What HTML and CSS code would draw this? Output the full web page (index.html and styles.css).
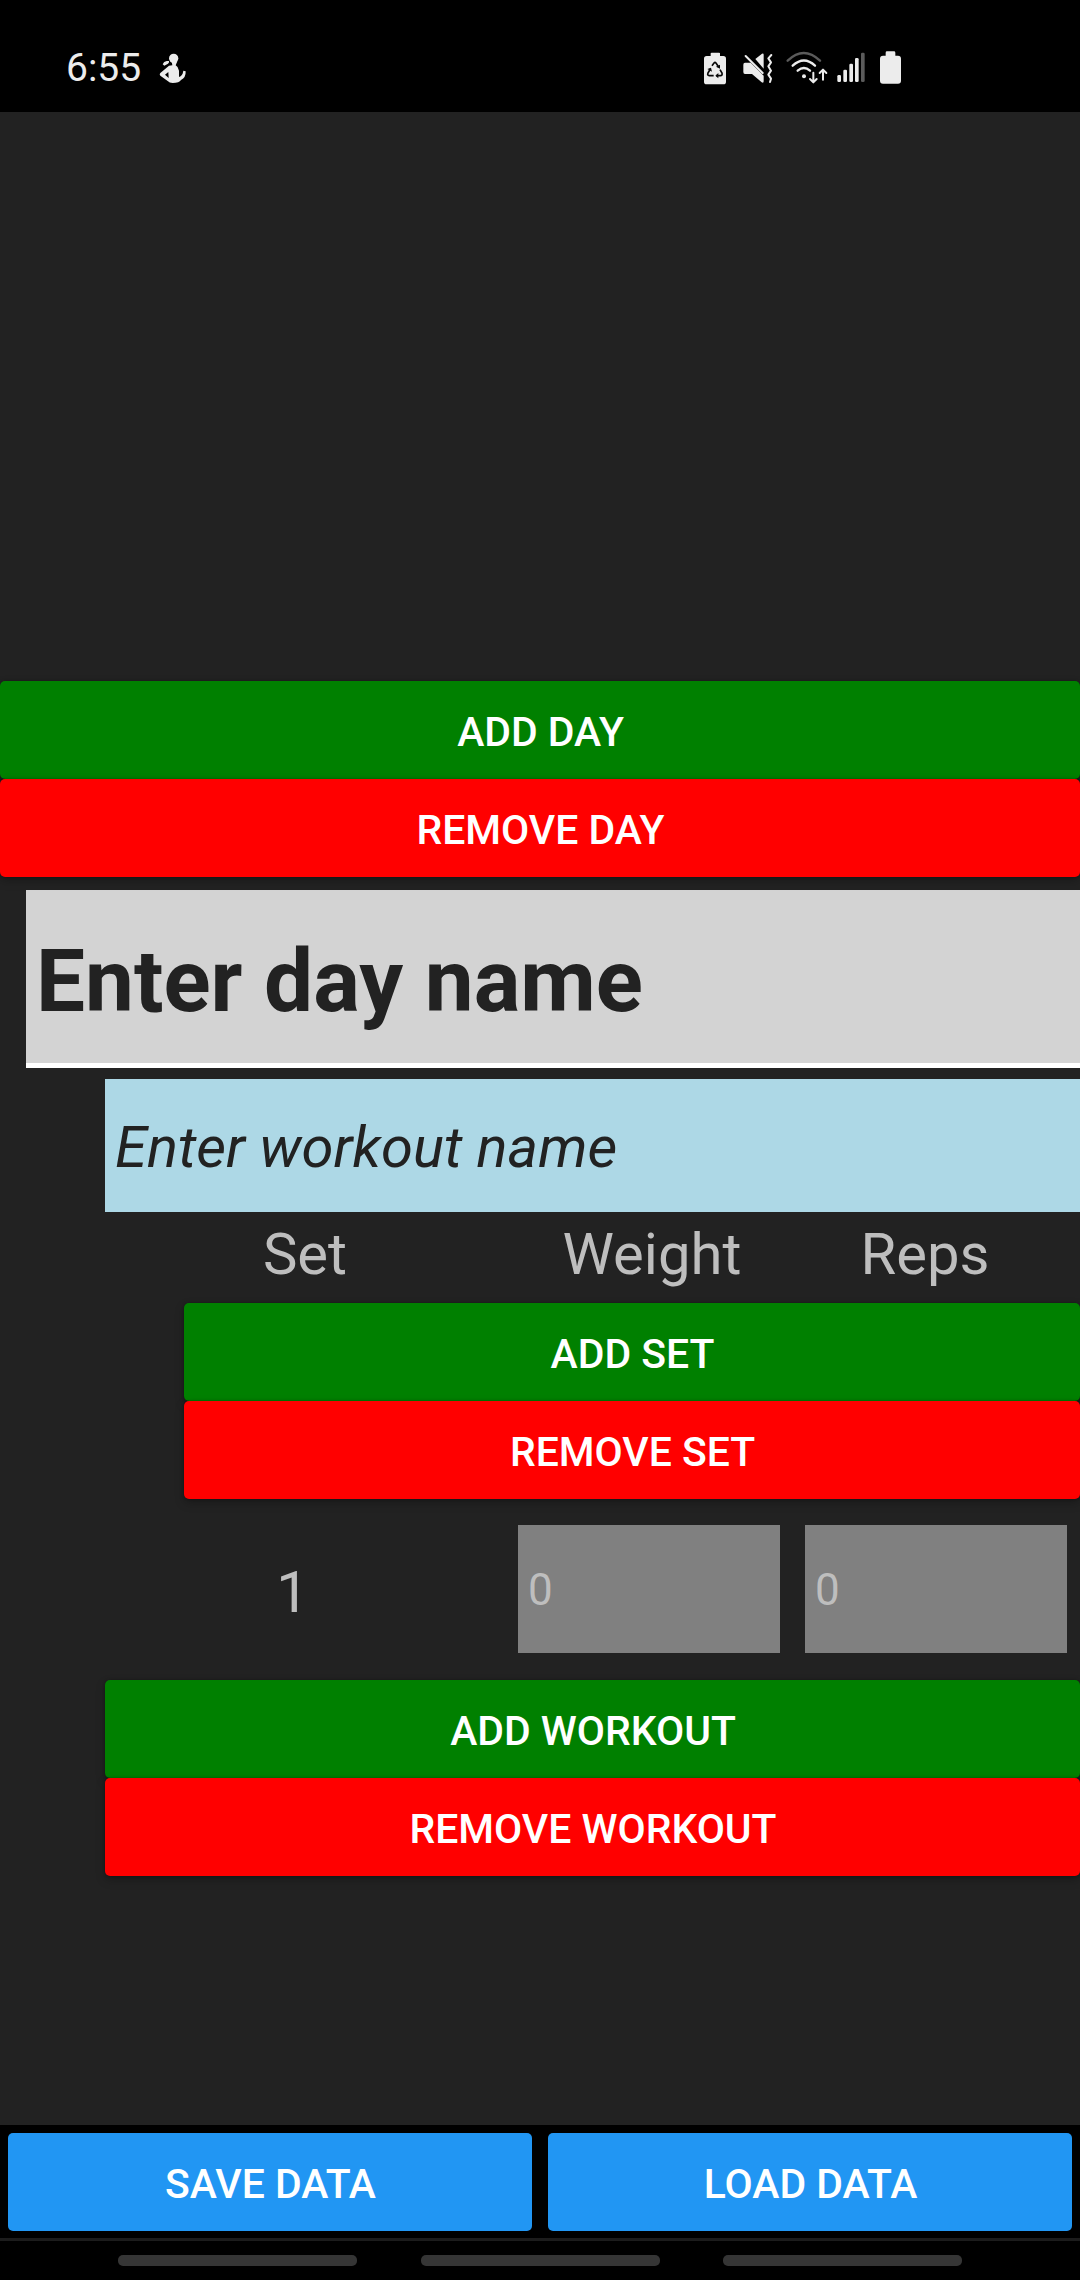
FILE: index.html
```html
<!DOCTYPE html>
<html lang="en">
<head>
<meta charset="utf-8">
<title>Workout log</title>
<link rel="stylesheet" href="styles.css">
</head>
<body>
<header class="status">
  <span class="clock">6:55</span>
  <svg class="notice" width="30" height="36" viewBox="324 60 90 108" fill="#ececec"><ellipse cx="371" cy="85" rx="14" ry="14"/><path d="M365 94h17l-5 12q9 5 10 16v19q11-4 12-14l1-5 7 2q1 19-14 26-5 9-25 9-10 0-15-6l-22-16q-4-4 0-8l26-22 10-1zM345 134l11 10-1-18z"/><path d="M357 93q2 4-3 8l-11 6-5-4q3-9 12-10z"/></svg>
  <div class="system">
    <svg class="saver" width="26" height="36" viewBox="36 60 78 108"><path fill="#ececec" d="M62 70q0-2 3-2h22q3 0 3 2v8h10q8 0 8 8v69q0 8-8 8H50q-8 0-8-8V86q0-8 8-8h12z"/><g fill="none" stroke="#080808" stroke-width="5"><path d="M66 107l6-8q3-3 6 0l8 12M90 119l6 10q2 8-5 8H79M71 137H58q-7-1-4-8l7-12"/></g><path fill="#080808" d="M78 110l12-6v12zM85 129v16l-9-8zM52 117l11-4 3 12z"/></svg>
    <svg class="mute" width="34" height="36" viewBox="153 60 102 108"><path fill="#ececec" d="M196 87l20-16q5-2 5 3v42zM165 98h17l39 39v17q0 7-6 3l-29-25h-21q-5 0-5-6v-22q0-6 5-6z"/><g fill="none" stroke="#ececec" stroke-width="6" stroke-linecap="round" stroke-linejoin="round"><path d="M167 78l51 51"/><path d="M244 75l-9 10 8 12-8 12 8 13-8 12 8 12-3 10"/></g></svg>
    <svg class="wifi" width="44" height="36" viewBox="285 60 132 108"><g fill="none" stroke="#ececec" stroke-width="7" stroke-linecap="round" stroke-linejoin="round"><path stroke="#5b5b5b" d="M293 92q48-46 97 0"/><path d="M308 107q34-31 67 0M323 122q19-16 37 0"/><g stroke-width="6"><path d="M370 128v28M360 147l10 10 10-10M399 149v-28M389 129l10-10 10 10"/></g></g><circle cx="342" cy="139" r="6" fill="#ececec"/></svg>
    <svg class="signal" width="32" height="36" viewBox="435 60 96 108" fill="#ececec"><rect x="442" y="135" width="11" height="21" rx="4"/><rect x="460" y="119" width="11" height="37" rx="4"/><rect x="478" y="101" width="11" height="55" rx="4"/><rect x="495" y="84" width="11" height="72" rx="4"/><rect x="513" y="68" width="11" height="88" rx="4" fill="#5b5b5b"/></svg>
    <svg class="battery" width="25" height="36" viewBox="564 60 75 108"><path fill="#ececec" d="M587 68q0-4 4-4h21q4 0 4 4v9h8q9 0 9 9v66q0 9-9 9h-45q-9 0-9-9V86q0-9 9-9h8z"/></svg>
  </div>
</header>
<main class="content">
  <div class="actions">
    <button class="btn add">ADD DAY</button>
    <button class="btn remove">REMOVE DAY</button>
  </div>
  <section class="day">
    <div class="day-name">Enter day name</div>
    <div class="workout">
      <div class="workout-name">Enter workout name</div>
      <div class="columns"><span>Set</span><span>Weight</span><span>Reps</span></div>
      <div class="actions set-actions">
        <button class="btn add">ADD SET</button>
        <button class="btn remove">REMOVE SET</button>
      </div>
      <div class="set-row">
        <span class="set-number">1</span>
        <div class="amount">0</div>
        <div class="amount">0</div>
      </div>
      <div class="actions">
        <button class="btn add">ADD WORKOUT</button>
        <button class="btn remove">REMOVE WORKOUT</button>
      </div>
    </div>
  </section>
</main>
<footer class="data-bar">
  <button class="btn data">SAVE DATA</button>
  <button class="btn data">LOAD DATA</button>
</footer>
<nav class="gestures"><i></i><i></i><i></i></nav>
</body>
</html>
```
FILE: styles.css
```css
* { box-sizing: border-box; }
body {
  margin: 0;
  width: 1080px;
  height: 2280px;
  display: flex;
  flex-direction: column;
  overflow: hidden;
  background: #000;
  color: #bebebe;
  font-family: Roboto, sans-serif;
}
.status {
  height: 112px;
  display: flex;
  align-items: flex-start;
  padding: 50px 177px 0 66px;
}
.clock {
  width: 92px;
  font-size: 39px;
  line-height: 36px;
  color: #ececec;
}
.system { display: flex; margin-left: auto; }
.mute { margin-left: 13px; }
.wifi { margin-left: 10px; }
.signal { margin-left: 6px; }
.battery { margin-left: 11px; }
.content {
  height: 2013px;
  padding-top: 569px;
  background: #222;
}
.actions { display: flex; flex-direction: column; }
.btn {
  display: block;
  height: 98px;
  border: 0;
  border-radius: 5px;
  padding: 4px 0 0 1px;
  color: #fff;
  font: 500 40.9px/94px Roboto, sans-serif;
  text-align: center;
  box-shadow: 0 4px 10px rgba(0, 0, 0, .25), 0 0 3px rgba(0, 0, 0, .3);
}
.add { background: #008000; }
.remove { background: #f00; }
.day { padding: 13px 0 0 26px; }
.day-name {
  height: 178px;
  padding: 0 10px;
  background: #d3d3d3;
  border-bottom: 5px solid #fff;
  color: #222;
  font-size: 87.2px;
  font-weight: 700;
  line-height: 182px;
}
.workout { padding: 11px 0 0 79px; }
.workout-name {
  height: 133px;
  padding: 0 10px;
  background: #add8e6;
  color: #222;
  font-size: 57.9px;
  font-style: italic;
  line-height: 137px;
}
.columns {
  display: grid;
  grid-template-columns: 400px 294px 252px;
  height: 91px;
  font-size: 58px;
  line-height: 84px;
  text-align: center;
}
.set-actions { margin-left: 79px; }
.set-row {
  display: flex;
  gap: 25px;
  padding: 26px 13px 27px 0;
}
.set-number {
  width: 388px;
  padding-right: 13px;
  font-size: 58px;
  line-height: 134px;
  height: 128px;
  text-align: center;
}
.amount {
  width: 262px;
  height: 128px;
  padding-left: 10px;
  background: #808080;
  font-size: 44px;
  line-height: 131px;
}
.data-bar {
  display: flex;
  gap: 16px;
  height: 113px;
  padding: 8px 8px 0;
}
.data { flex: 1; background: #2196f3; }
.gestures {
  display: flex;
  justify-content: space-between;
  height: 42px;
  padding: 14px 118px 0;
  border-top: 3px solid #1c1c1c;
}
.gestures i {
  width: 239px;
  height: 11px;
  border-radius: 5px;
  background: #353535;
}
```
